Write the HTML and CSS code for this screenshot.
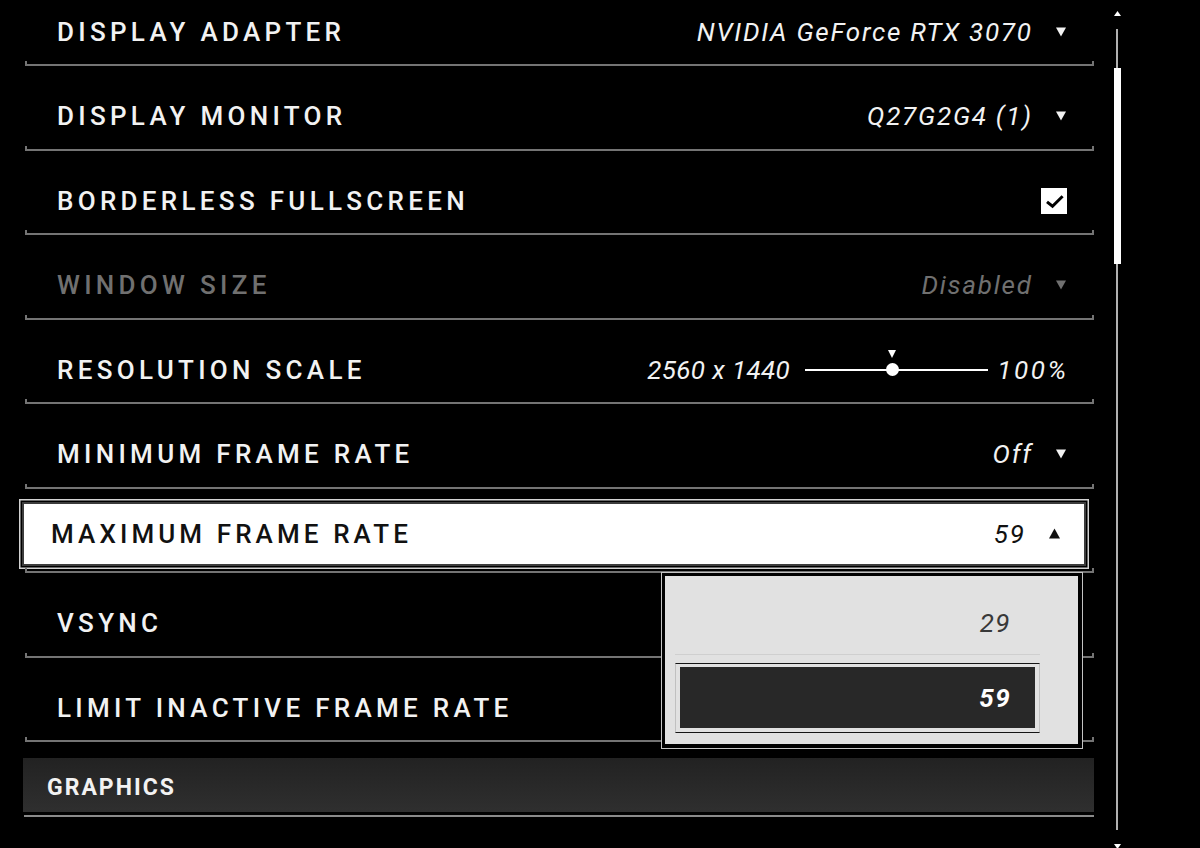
FILE: index.html
```html
<!DOCTYPE html>
<html lang="en">
<head>
<meta charset="utf-8">
<title>Video Settings</title>
<link rel="stylesheet" href="styles.css">
</head>
<body>
<div class="page">
  <main class="content">
    <div class="rows">
      <div class="row">
        <span class="label">DISPLAY ADAPTER</span>
        <span class="value">NVIDIA GeForce RTX 3070</span>
        <svg class="caret" viewBox="0 0 10 10"><path d="M0 0.5H10L5 9.5Z"/></svg>
      </div>
      <div class="row">
        <span class="label">DISPLAY MONITOR</span>
        <span class="value">Q27G2G4 (1)</span>
        <svg class="caret" viewBox="0 0 10 10"><path d="M0 0.5H10L5 9.5Z"/></svg>
      </div>
      <div class="row">
        <span class="label">BORDERLESS FULLSCREEN</span>
        <svg class="check" viewBox="0 0 26 26"><rect width="26" height="26" fill="#fff"/><path d="M6 13.8L11.5 18.2L21.6 8.2" fill="none" stroke="#000" stroke-width="3"/></svg>
      </div>
      <div class="row disabled">
        <span class="label">WINDOW SIZE</span>
        <span class="value">Disabled</span>
        <svg class="caret" viewBox="0 0 10 10"><path d="M0 0.5H10L5 9.5Z"/></svg>
      </div>
      <div class="row">
        <span class="label">RESOLUTION SCALE</span>
        <span class="value tight">2560 x 1440</span>
        <div class="slider">
          <div class="seg" style="flex:0 0 81.5px"></div>
          <div class="knob"></div>
          <div class="seg"></div>
        </div>
        <span class="value end">100%</span>
      </div>
      <div class="row">
        <span class="label">MINIMUM FRAME RATE</span>
        <span class="value">Off</span>
        <svg class="caret" viewBox="0 0 10 10"><path d="M0 0.5H10L5 9.5Z"/></svg>
      </div>
      <div class="row focused">
        <div class="focus-box">
          <span class="label">MAXIMUM FRAME RATE</span>
          <span class="value">59</span>
          <svg class="caret up" viewBox="0 0 11 11"><path d="M0 10.5H11L5.5 0.5Z"/></svg>
        </div>
        <div class="popup">
          <div class="panel">
            <div class="opt">29</div>
            <div class="opt-sel"><div class="opt-fill">59</div></div>
          </div>
        </div>
      </div>
      <div class="row">
        <span class="label">VSYNC</span>
      </div>
      <div class="row">
        <span class="label">LIMIT INACTIVE FRAME RATE</span>
      </div>
    </div>
    <div class="section">GRAPHICS</div>
    <div class="section-rule"></div>
  </main>
  <aside class="scroll">
    <svg class="sarrow" viewBox="0 0 7 5"><path d="M0 5H7L3.5 0Z"/></svg>
    <div class="track"><div class="thumb"></div></div>
    <svg class="sarrow down" viewBox="0 0 7 5"><path d="M0 0H7L3.5 5Z"/></svg>
  </aside>
</div>
</body>
</html>
```

FILE: styles.css
```css
* { box-sizing: border-box; }
html, body { margin: 0; padding: 0; }
body {
  background: #000;
  color: #f2f2f2;
  font-family: Roboto, "Liberation Sans", sans-serif;
  width: 1200px;
  height: 848px;
  overflow: hidden;
}
.page { display: flex; align-items: flex-start; }
.content { flex: none; width: 1069px; margin-left: 25px; }
.rows { margin-top: -18.5px; }

.row {
  position: relative;
  display: flex;
  align-items: center;
  height: 84.5px;
  padding: 17.5px 28px 0 32px;
  border-bottom: 2px solid #747474;
}
.row::before, .row::after {
  content: "";
  position: absolute;
  bottom: -2px;
  width: 2px;
  height: 5px;
  background: #747474;
}
.row::before { left: 0; }
.row::after { right: 0; }

.label {
  flex: 1;
  font-size: 26px;
  font-weight: 500;
  letter-spacing: 4.3px;
  line-height: 1;
  white-space: nowrap;
}
.value {
  font-size: 26px;
  font-style: italic;
  letter-spacing: 1.75px;
  line-height: 1;
  white-space: nowrap;
}
.value.tight { letter-spacing: 0.4px; }
.value.end { letter-spacing: 2.6px; margin-right: -2.6px; }
.caret {
  flex: none;
  width: 10px;
  height: 10px;
  margin-left: 23.3px;
  fill: currentColor;
}
.row.disabled { color: #707070; }
.check { display: block; flex: none; width: 26px; height: 26px; margin-right: -1px; }

.slider {
  display: flex;
  align-items: center;
  width: 183px;
  margin: 0 9px 0 15px;
}
.seg { height: 2px; background: #fff; flex: 1; }
.knob {
  position: relative;
  flex: none;
  width: 13px;
  height: 13px;
  margin: 0 -1px;
  border-radius: 50%;
  background: #fff;
}
.knob::before {
  content: "";
  position: absolute;
  left: 2px;
  top: -13.5px;
  border-left: 4.5px solid transparent;
  border-right: 4.5px solid transparent;
  border-top: 8px solid #fff;
}

.row.focused { padding: 13px 0 0 0; align-items: flex-start; }
.focus-box {
  display: flex;
  align-items: center;
  width: 1064px;
  height: 64px;
  margin-left: -3.5px;
  padding: 0 23.5px 0 27.5px;
  background: #fff;
  border: 2px solid #3c3c3c;
  box-shadow: 0 0 0 1.5px #000, 0 0 0 3px #d2d2d2;
  color: #111;
}
.focus-box .label { letter-spacing: 4.1px; }
.caret.up { width: 11px; height: 11px; }

.popup {
  position: absolute;
  top: 83.2px;
  left: 635.7px;
  width: 422px;
  border: 1.5px solid #c4c4c4;
  background: #000;
  padding: 3.5px;
  z-index: 2;
}
.panel { background: #e1e1e1; padding: 0 38.7px 11.7px 10.3px; }
.opt {
  display: flex;
  align-items: center;
  justify-content: flex-end;
  height: 79.3px;
  padding: 15.4px 28.5px 0 0;
  border-bottom: 1px solid #cfcfcf;
  color: #383838;
  font-size: 26px;
  font-style: italic;
  letter-spacing: 1.5px;
  line-height: 1;
}
.opt-sel {
  margin-top: 7.3px;
  height: 70px;
  padding: 3.3px;
  border-top: 1.2px solid #151515;
  border-bottom: 1.2px solid #151515;
  border-left: 1px solid #c0c0c0;
  border-right: 1px solid #c0c0c0;
}
.opt-fill {
  display: flex;
  align-items: center;
  justify-content: flex-end;
  height: 100%;
  padding-right: 24px;
  background: #282828;
  color: #fff;
  font-size: 26px;
  font-weight: 700;
  font-style: italic;
  letter-spacing: 1.5px;
  line-height: 1;
}

.section {
  display: flex;
  align-items: center;
  height: 54px;
  margin: 15.7px 0 0 -2px;
  padding: 6px 0 0 24px;
  background: linear-gradient(#222, #2f2f2f);
  font-size: 23px;
  font-weight: 700;
  letter-spacing: 2px;
  line-height: 1;
}
.section-rule { height: 2px; margin: 3.5px 0 0 -1px; background: #8a8a8a; }

.scroll {
  flex: none;
  width: 8px;
  margin-left: 19px;
  padding-top: 11px;
  display: flex;
  flex-direction: column;
  align-items: center;
}
.sarrow { display: block; flex: none; width: 7px; height: 5px; fill: #fff; }
.sarrow.down { margin-top: 14px; }
.track {
  flex: none;
  display: flex;
  justify-content: center;
  align-items: flex-start;
  width: 2px;
  height: 801px;
  margin-top: 13px;
  background: #b0b0b0;
}
.thumb { flex: none; width: 7px; height: 196px; margin-top: 39px; background: #fff; }
```
